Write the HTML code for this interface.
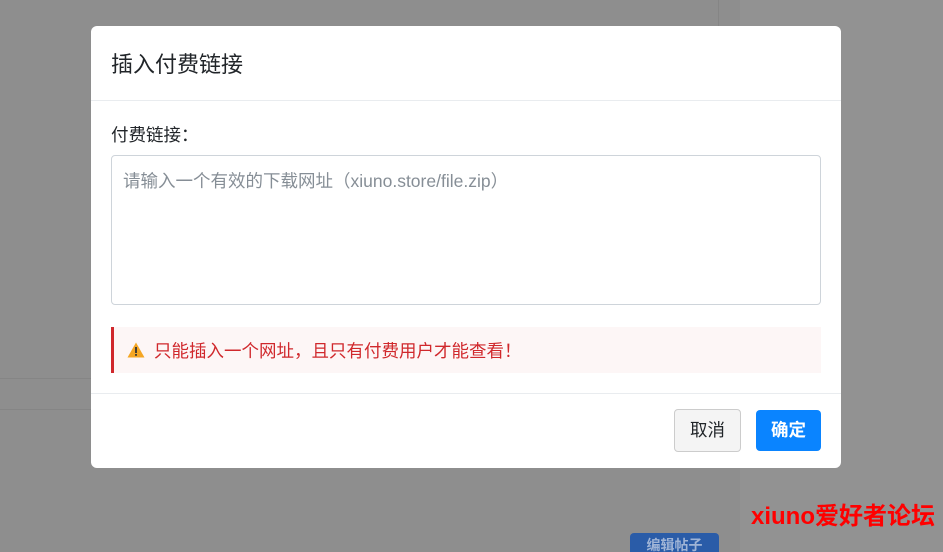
<!DOCTYPE html>
<html><head><meta charset="utf-8"><style>
*{box-sizing:border-box;margin:0;padding:0}
html,body{width:943px;height:552px;overflow:hidden}
body{background:#8e8e8e;font-family:"Liberation Sans","Noto Sans CJK SC",sans-serif;position:relative}
.bgR{position:absolute;left:740px;top:0;width:203px;height:552px;background:#929292}
.vl{position:absolute;left:718px;top:0;width:1px;height:30px;background:#858585}
.hl{position:absolute;left:0;width:91px;height:1px;background:#858585}
.modal{position:absolute;left:91px;top:26px;width:750px;height:442px;background:#fff;border-radius:6px;overflow:hidden}
.hd{height:75px;border-bottom:1px solid #e9ecef;padding:21px 20px;font-size:22px;color:#212529}
.lbl{position:absolute;left:20px;top:96px;font-size:17.5px;color:#212529}
.ta{position:absolute;left:20px;top:129px;width:710px;height:150px;border:1px solid #ced4da;border-radius:4px;padding:12px 11px;font-size:17.5px;color:#868e96}
.alert{position:absolute;left:20px;top:301px;width:710px;height:46px;background:#fdf6f6;border-left:3px solid #d0282c;padding:12px 13px;font-size:17.5px;color:#d0282c;display:flex;align-items:center}
.alert svg{margin-right:9px}
.ft{position:absolute;left:0;top:367px;width:750px;border-top:1px solid #e9ecef}
.b1{position:absolute;left:583px;top:383px;width:67px;height:43px;border:1px solid #ccc;background:#f4f4f4;border-radius:4px;font-size:17.5px;color:#212529;text-align:center;line-height:41px}
.b2{position:absolute;left:665px;top:384px;width:65px;height:41px;background:#0a84ff;border-radius:4px;font-size:17.5px;color:#fff;text-align:center;line-height:41px;font-weight:bold}
.wm{position:absolute;left:751px;top:496px;font-size:24px;font-weight:bold;color:#f00;white-space:nowrap}
.eb{position:absolute;left:630px;top:533px;width:89px;height:19px;background:#2a5ca8;border-radius:4px 4px 0 0;color:#9fb4d6;font-size:14px;text-align:center;line-height:24px;font-weight:bold;overflow:hidden}
</style></head><body>
<div class="bgR"></div><div class="vl"></div>
<div class="hl" style="top:378px"></div><div class="hl" style="top:409px"></div>
<div class="eb">编辑帖子</div>
<div class="modal">
<div class="hd">插入付费链接</div>
<div class="lbl">付费链接：</div>
<div class="ta">请输入一个有效的下载网址（xiuno.store/file.zip）</div>
<div class="alert"><svg width="18" height="16" viewBox="0 0 18 16"><path d="M9 0.5L17.5 15.5H0.5Z" fill="#f5a623"/><rect x="8.1" y="5" width="1.8" height="6" fill="#333"/><rect x="8.1" y="12" width="1.8" height="1.8" fill="#333"/></svg>只能插入一个网址，且只有付费用户才能查看！</div>
<div class="ft"></div>
<div class="b1">取消</div>
<div class="b2">确定</div>
</div>
<div class="wm">xiuno爱好者论坛</div>
</body></html>
